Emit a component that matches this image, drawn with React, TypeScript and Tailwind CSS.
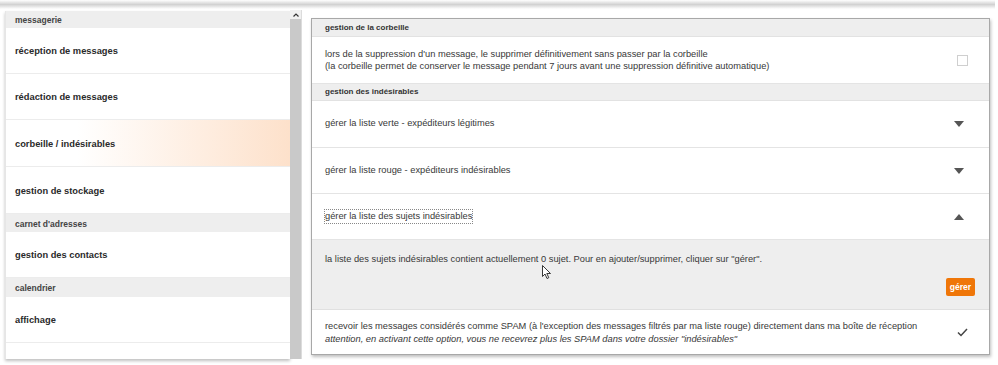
const font = { fontFamily: '"Liberation Sans", Arial, sans-serif' };

type NavEntry = { kind: 'header' | 'item'; label: string; h: string; active?: boolean };

const nav: NavEntry[] = [
  { kind: 'header', label: 'messagerie', h: 'h-[17px]' },
  { kind: 'item', label: 'réception de messages', h: 'h-[46px]' },
  { kind: 'item', label: 'rédaction de messages', h: 'h-[46px]' },
  { kind: 'item', label: 'corbeille / indésirables', h: 'h-[47px]', active: true },
  { kind: 'item', label: 'gestion de stockage', h: 'h-[47px]' },
  { kind: 'header', label: "carnet d'adresses", h: 'h-[18px]' },
  { kind: 'item', label: 'gestion des contacts', h: 'h-[46px]' },
  { kind: 'header', label: 'calendrier', h: 'h-[19px]' },
  { kind: 'item', label: 'affichage', h: 'h-[46px]' },
  { kind: 'item', label: '', h: 'h-[46px]' },
];

function Caret({ up }: { up?: boolean }) {
  return (
    <svg width="10" height="6" viewBox="0 0 10 6" className="shrink-0">
      {up ? <path d="M0 6 L5 0 L10 6 Z" fill="#555" /> : <path d="M0 0 L10 0 L5 6 Z" fill="#555" />}
    </svg>
  );
}

function SectionHeader({ label, h }: { label: string; h: string }) {
  return (
    <div className={`${h} flex items-center px-[13px] bg-[#eeeeee] border-b border-[#e2e2e2] text-[8px] font-bold text-[#333]`}>
      {label}
    </div>
  );
}

function ListRow({ label, up, focused, h }: { label: string; up?: boolean; focused?: boolean; h: string }) {
  return (
    <div className={`${h} flex items-center justify-between pl-[13px] pr-[25px] border-b border-[#e4e4e4] bg-white`}>
      <span className={`text-[9.3px] text-[#383838] ${focused ? 'outline-1 outline-dotted outline-[#888]' : ''}`}>{label}</span>
      <Caret up={up} />
    </div>
  );
}

export default function App() {
  return (
    <div className="w-[998px] h-[365px] bg-white overflow-hidden relative" style={font}>
      <div className="h-[9px] mr-[3px] bg-gradient-to-b from-white via-[#d2d2d2] to-white" />
      <div className="flex h-[350px]">
        <div className="ml-[5px] w-[285px] mt-[2px] h-[348px] border-l border-[#e6e6e6] shadow-[0_2px_3px_rgba(0,0,0,0.25)] overflow-hidden">
          {nav.map((n, i) =>
            n.kind === 'header' ? (
              <div key={i} className={`${n.h} flex items-center pl-[9px] pt-[2px] bg-[#eeeeee] text-[8.5px] font-bold text-[#444]`}>
                {n.label}
              </div>
            ) : (
              <div
                key={i}
                className={`${n.h} flex items-center pl-[9px] pt-[3px] border-b border-[#ececec] text-[9.3px] font-bold text-[#2a2a2a] ${
                  n.active ? 'bg-gradient-to-r from-white from-[25%] to-[#fde1cb]' : 'bg-white'
                }`}
              >
                {n.label}
              </div>
            )
          )}
        </div>
        <div className="w-[12px] mt-[1px] h-[349px] flex flex-col bg-[#c9c9c9] border-r border-[#dcdcdc]">
          <div className="h-[9px] bg-[#f0f0f0] flex items-center justify-center">
            <svg width="6" height="4" viewBox="0 0 6 4">
              <path d="M0.5 3.5 L3 1 L5.5 3.5" stroke="#333" strokeWidth="1.2" fill="none" />
            </svg>
          </div>
        </div>
        <div className="flex-1 pl-[9px] pr-[8px] pt-[9px]">
          <div className="relative h-[337px] border border-[#a8a8a8] shadow-[1px_2px_3px_rgba(0,0,0,0.25)] bg-white">
            <SectionHeader label="gestion de la corbeille" h="h-[18px]" />
            <div className="h-[47px] flex items-center justify-between pl-[13px] pr-[21px] border-b border-[#e4e4e4]">
              <div className="text-[9.3px] leading-[12px] text-[#383838]">
                <div>lors de la suppression d'un message, le supprimer définitivement sans passer par la corbeille</div>
                <div>(la corbeille permet de conserver le message pendant 7 jours avant une suppression définitive automatique)</div>
              </div>
              <div className="w-[11px] h-[11px] border border-[#cfcfcf] bg-white" />
            </div>
            <SectionHeader label="gestion des indésirables" h="h-[17px]" />
            <ListRow label="gérer la liste verte - expéditeurs légitimes" h="h-[47px]" />
            <ListRow label="gérer la liste rouge - expéditeurs indésirables" h="h-[46px]" />
            <ListRow label="gérer la liste des sujets indésirables" up focused h="h-[46px]" />
            <div className="h-[70px] bg-[#eeeeee] border-b border-[#e0e0e0] pl-[13px] pr-[14px] pt-[13px] flex flex-col">
              <div className="text-[9.3px] text-[#383838]">
                la liste des sujets indésirables contient actuellement 0 sujet. Pour en ajouter/supprimer, cliquer sur "gérer".
              </div>
              <div className="flex justify-end mt-[11px]">
                <button className="h-[18px] px-[4px] rounded-[2px] bg-[#ef7608] text-white text-[8.5px] font-bold">gérer</button>
              </div>
            </div>
            <div className="h-[45px] flex items-center justify-between pl-[13px] pr-[21px]">
              <div className="text-[9.3px] leading-[13px] text-[#383838]">
                <div>
                  recevoir les messages considérés comme SPAM (à l'exception des messages filtrés par ma liste rouge) directement dans ma boîte de réception
                </div>
                <div className="italic">
                  attention, en activant cette option, vous ne recevrez plus les SPAM dans votre dossier "indésirables"
                </div>
              </div>
              <svg width="11" height="9" viewBox="0 0 11 9" className="shrink-0">
                <path d="M1 4.5 L4 7.5 L10 1" stroke="#444" strokeWidth="1.5" fill="none" />
              </svg>
            </div>
            <svg width="10" height="15" viewBox="0 0 10 15" className="absolute left-[230px] top-[246px]">
              <path d="M0.5 0.5 L0.5 11.5 L3 9 L5 13.5 L6.8 12.7 L4.8 8.5 L8.5 8.5 Z" fill="white" stroke="#222" strokeWidth="0.9" />
            </svg>
          </div>
        </div>
      </div>
    </div>
  );
}
